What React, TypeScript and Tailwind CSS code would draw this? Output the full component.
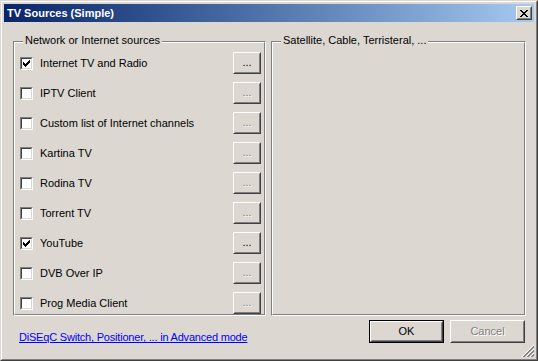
import React from "react";

const BG = "bg-[#dcd8d1]";

function Pixels({ map, color }: { map: string[]; color: string }) {
  const w = map[0].length;
  const h = map.length;
  const rects: React.ReactElement[] = [];
  map.forEach((row, y) =>
    row.split("").forEach((c, x) => {
      if (c === "X") rects.push(<rect key={`${x}-${y}`} x={x} y={y} width={1} height={1} fill={color} />);
    })
  );
  return (
    <svg width={w} height={h} viewBox={`0 0 ${w} ${h}`} shapeRendering="crispEdges" className="block">
      {rects}
    </svg>
  );
}

const CHECK = ["......X", ".....XX", "X...XXX", "XX.XXX.", "XXXXX..", ".XXX...", "..X...."];
const CLOSE_X = ["XX....XX", ".XX..XX.", "..XXXX..", "...XX...", "..XXXX..", ".XX..XX.", "XX....XX"];

function Checkbox({ checked }: { checked: boolean }) {
  return (
    <div className="w-[13px] h-[13px] shrink-0 border border-t-[#808080] border-l-[#808080] border-b-white border-r-white">
      <div className="w-full h-full border border-t-[#404040] border-l-[#404040] border-b-[#dcd8d1] border-r-[#dcd8d1] bg-white flex items-center justify-center">
        {checked && <Pixels map={CHECK} color="#000" />}
      </div>
    </div>
  );
}

function Raised({ className = "", children }: { className?: string; children?: React.ReactNode }) {
  return (
    <div className={`border border-t-white border-l-white border-b-[#404040] border-r-[#404040] ${className}`}>
      <div className={`w-full h-full border border-t-[#dcd8d1] border-l-[#dcd8d1] border-b-[#808080] border-r-[#808080] ${BG} flex items-center justify-center`}>
        {children}
      </div>
    </div>
  );
}

function Group({ title, className = "", children }: { title: string; className?: string; children?: React.ReactNode }) {
  return (
    <div className={`relative border border-t-[#808080] border-l-[#808080] border-b-white border-r-white ${className}`}>
      <div className="h-full border border-t-white border-l-white border-b-[#808080] border-r-[#808080]">{children}</div>
      <span className={`absolute left-[9px] top-[-8px] px-[2px] ${BG} leading-[13px] text-black`}>{title}</span>
    </div>
  );
}

const ROWS: { label: string; checked: boolean }[] = [
  { label: "Internet TV and Radio", checked: true },
  { label: "IPTV Client", checked: false },
  { label: "Custom list of Internet channels", checked: false },
  { label: "Kartina TV", checked: false },
  { label: "Rodina TV", checked: false },
  { label: "Torrent TV", checked: false },
  { label: "YouTube", checked: true },
  { label: "DVB Over IP", checked: false },
  { label: "Prog Media Client", checked: false },
];

const disabledText = "text-[#808080] [text-shadow:1px_1px_0_#ffffff]";

function Grip() {
  return (
    <svg width="12" height="12" viewBox="0 0 12 12" className="block">
      {[0, 4, 8].map((k) => (
        <g key={k}>
          <line x1={12} y1={k} x2={k} y2={12} stroke="#ffffff" strokeWidth={1} />
          <line x1={12} y1={k + 1} x2={k + 1} y2={12} stroke="#808080" strokeWidth={1} />
          <line x1={12} y1={k + 2} x2={k + 2} y2={12} stroke="#808080" strokeWidth={1} />
        </g>
      ))}
    </svg>
  );
}

export default function App() {
  return (
    <div className="[font-family:'Liberation_Sans',Arial,sans-serif] text-[11px] text-black">
      <div className={`w-[538px] h-[361px] ${BG} border border-t-[#dcd8d1] border-l-[#dcd8d1] border-b-[#404040] border-r-[#404040]`}>
        <div className="w-full h-full border border-t-white border-l-white border-b-[#808080] border-r-[#808080] p-[2px] flex flex-col">
          {/* Title bar */}
          <div className="h-[18px] shrink-0 flex items-center justify-between bg-gradient-to-r from-[#0a246a] to-[#a6caf0] pl-[3px] pr-[2px]">
            <span className="text-white font-bold text-[11px] leading-[13px]">TV Sources (Simple)</span>
            <Raised className="w-[16px] h-[14px]">
              <Pixels map={CLOSE_X} color="#000" />
            </Raised>
          </div>
          {/* Body */}
          <div className="relative flex-1 flex flex-col pl-[9px] pr-[8px] pt-[19px]">
            <div className="flex gap-[5px] h-[275px]">
              <Group title="Network or Internet sources" className="w-[253px]">
                <div className="flex flex-col pt-[5px] pl-[5px] pr-[3px]">
                  {ROWS.map((r) => (
                    <div key={r.label} className="h-[30px] flex items-center">
                      <Checkbox checked={r.checked} />
                      <span className="ml-[7px] flex-1 leading-[13px]">{r.label}</span>
                      <Raised className="w-[28px] h-[22px]">
                        <span className={`leading-[11px] pb-[2px] ${r.checked ? "text-black" : disabledText}`}>...</span>
                      </Raised>
                    </div>
                  ))}
                </div>
              </Group>
              <Group title="Satellite, Cable, Terristeral, ..." className="w-[255px]" />
            </div>
            <div className="flex items-start mt-[4px] mr-[1px]">
              <a href="#" className="ml-[6px] mt-[11px] leading-[13px] text-[#0000ff] underline flex-1 tracking-[-0.2px]">
                DiSEqC Switch, Positioner, ... in Advanced mode
              </a>
              <div className="w-[75px] h-[23px] border border-black">
                <Raised className="w-full h-full">
                  <span className="leading-[13px]">OK</span>
                </Raised>
              </div>
              <Raised className="w-[75px] h-[23px] ml-[6px]">
                <span className={`leading-[13px] ${disabledText}`}>Cancel</span>
              </Raised>
            </div>
            <div className="absolute right-0 bottom-0">
              <Grip />
            </div>
          </div>
        </div>
      </div>
    </div>
  );
}
